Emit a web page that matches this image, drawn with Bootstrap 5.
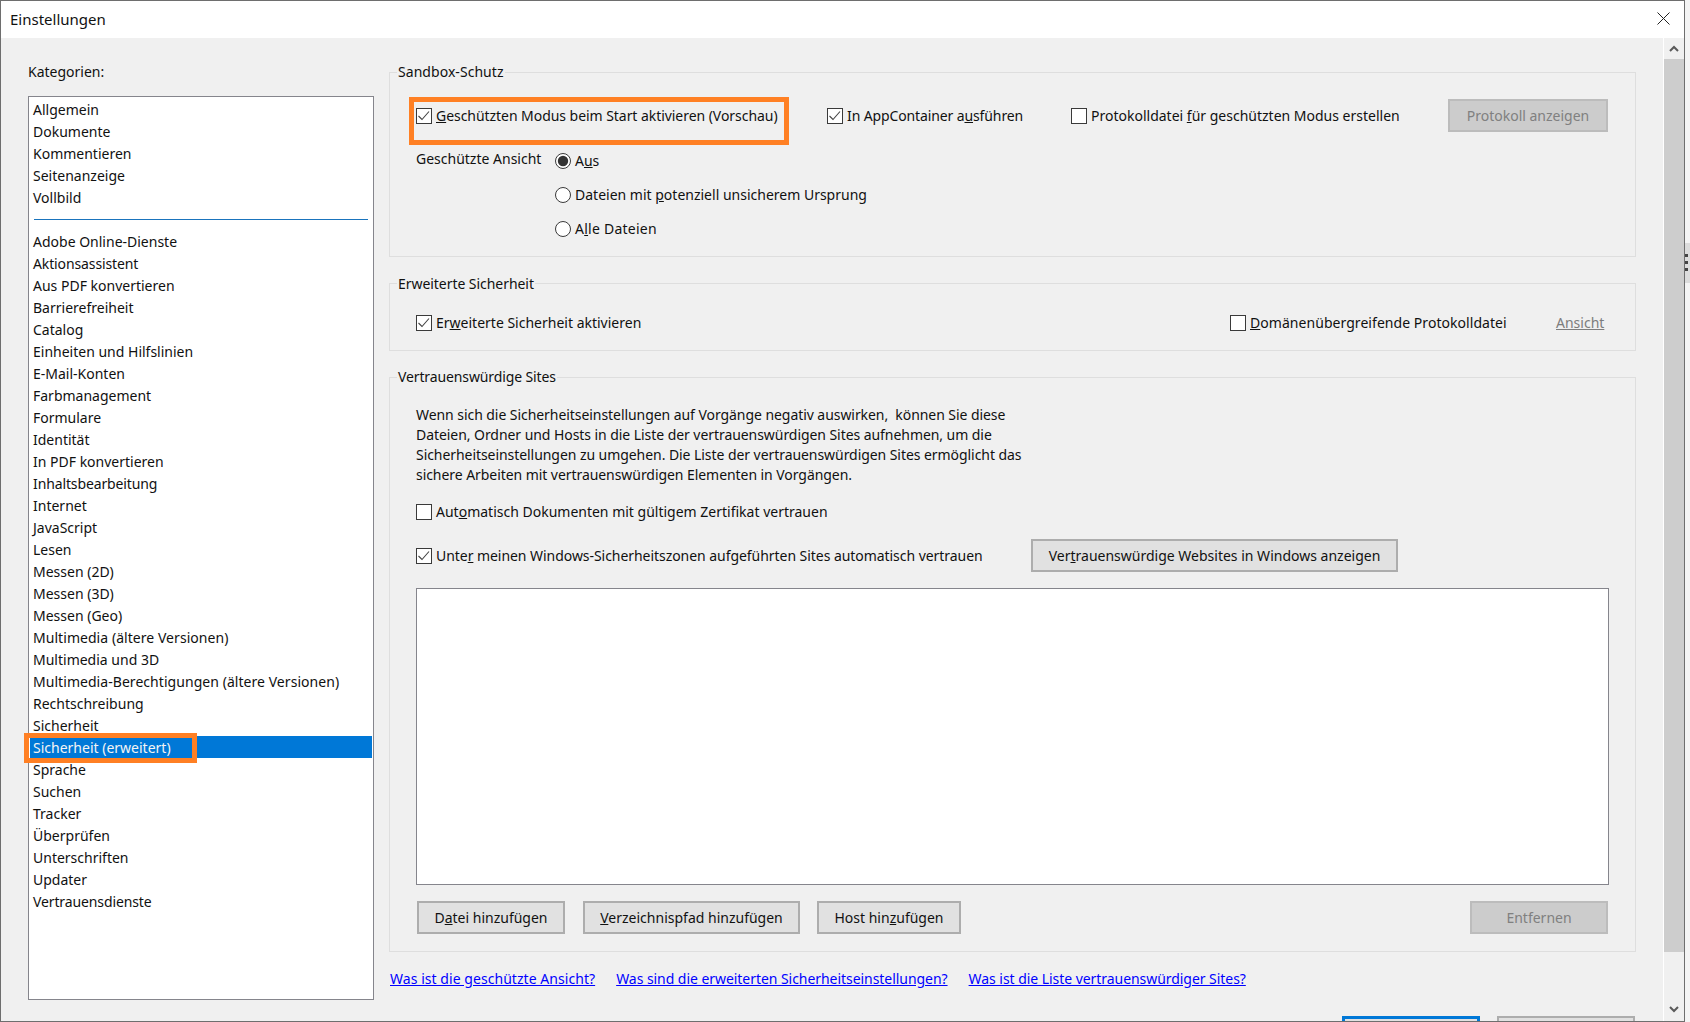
<!doctype html>
<html lang="de"><head><meta charset="utf-8"><title>Einstellungen</title>
<link rel="stylesheet" href="https://cdn.jsdelivr.net/npm/bootstrap@5.3.0/dist/css/bootstrap.min.css">
<style>
html,body{height:100%}
body{background:#f4f4f4;margin:0;overflow:hidden;font-family:"Noto Sans","Liberation Sans",sans-serif;font-size:14px;line-height:20px;color:#111}
.win{width:1685px;height:1022px;border:1px solid #6e6e6e;flex:none;overflow:hidden}
.titlebar{height:37px;background:#fff;padding-left:9px;padding-right:14px;padding-bottom:2px;font-size:15px}
.client{height:983px;background:#f0f0f0;overflow:hidden}
.leftcol{width:346px;margin-left:27px;margin-top:24px;margin-right:15px;flex:none}
.katlabel{height:20px;margin-bottom:14px}
.katlist{height:904px;border:1px solid #85858c;background:#fff;padding:2px 1px;border-radius:0;display:block}
.katlist .list-group-item{border:0;padding:1px 0 1px 3px;height:22px;line-height:20px;background:transparent;color:#111;border-radius:0;font-size:14px}
.katlist .list-group-item.active{background:#0078d7;color:#f4f4f4;position:relative;margin-top:-1px;margin-bottom:1px;padding-top:2px;padding-bottom:0}
.katsep{height:1px;background:#1a74bd;margin:10px 4px 11px}
.callout{position:absolute;border:5px solid #ff8024;pointer-events:none}
.callout-a{left:-6px;top:-3px;width:173px;height:30px}
.callout-b{left:-7px;top:-9px;width:380px;height:48px}
.rightcol{width:1247px;flex:none;padding-top:24px}
.grp{border:1px solid #dedede;padding:0;margin:0;min-width:0}
.grp>legend{float:none;width:auto;font-size:14px;line-height:20px;margin:0 0 0 7px;padding:0 1px;height:20px}
.grp-a{height:195px}.grp-b{height:78px;margin-top:16px}.grp-c{height:585px;margin-top:16px}
.grp-b>legend{padding-top:1px}
.rowline{padding-left:26px;padding-right:27px}
.cell-a{width:411px;position:relative}.cell-b{width:244px}.cell-c{width:377px}
.r1{margin-top:17px;height:33px}
.gsa{width:139px;margin-top:5px}
.r2{margin-top:12px}
.radrow{height:34px}
.r3{margin-top:13px;height:34px}
.cell-d{width:814px}.cell-e{width:326px}
.para{margin:18px 0 0 26px;width:640px;letter-spacing:-.06px}
.r4{margin-top:15px;height:24px}
.r5{margin-top:15px;height:33px}
.cell-f{width:615px}
.wbox{margin:16px 26px 0 26px;height:297px;background:#fff;border:1px solid #85858c}
.r6{margin-top:16px;height:33px;padding-left:27px}
.helplinks{margin-top:17px;height:20px;padding-left:1px;gap:21px}
.helplinks a{color:#00f}
.footbtns{margin-top:27px;gap:17px;justify-content:flex-end;padding-right:1px}
.ls-p{letter-spacing:.05px}.ls-pp{letter-spacing:.25px}.ls-n{letter-spacing:-.05px}.ls-nn{letter-spacing:-.12px}
.form-check-input.xbox{width:16px;height:16px;margin:0 4px 0 0;border:1px solid #3a3a3a;border-radius:0;background-color:#fff;flex:none}
.form-check-input.xbox:checked{background-color:#fff;border-color:#3a3a3a;background-image:url("data:image/svg+xml,%3Csvg xmlns='http://www.w3.org/2000/svg' viewBox='0 0 16 16'%3E%3Cpath d='M2.5 8l3.5 3.5 7-8' fill='none' stroke='%23444' stroke-width='1.1'/%3E%3C/svg%3E");background-size:16px 16px}
.form-check-input.xrad{width:16px;height:16px;margin:0 4px 0 0;border:1px solid #3a3a3a;background-color:#fff;flex:none}
.form-check-input.xrad:checked{background-color:#fff;border-color:#3a3a3a;background-image:url("data:image/svg+xml,%3Csvg xmlns='http://www.w3.org/2000/svg' viewBox='0 0 16 16'%3E%3Ccircle cx='8' cy='8' r='5.2' fill='%23333'/%3E%3C/svg%3E");background-size:16px 16px}
.form-check-input.xbox:focus,.form-check-input.xrad:focus{box-shadow:none}
.lab{margin:0}
.wbtn{height:33px;padding:0;border-radius:0;font-size:14px;line-height:20px;border:2px solid #adadad;background:#e1e1e1;color:#111;flex:none}
.wbtn:disabled{background:#ccc;border-color:#bcbcbc;color:#808080;opacity:1}
.b-prot{width:160px}.b-win{width:367px}
.b-dat{width:148px}.b-ver{width:217px;margin-left:18px}.b-host{width:144px;margin-left:17px}.b-ent{width:138px}
.b-ok{width:138px;height:30px;border:3px solid #0078d7}.b-cancel{width:138px;height:30px}
.ansicht{color:#7d7d7d}
.scrolltrack{width:21px;flex:none;border-left:1px solid #fff;background:#f0f0f0}
.sarrow{height:21px}
.sthumb{height:893px;background:#cdcdcd}
.slow{height:69px;padding-bottom:8px}
.sidestrip{width:5px;flex:none}
.strip-band{height:40px;margin-top:243px;background:#dcdcdc;padding-top:11px}
.strip-dot{height:3px;width:3px;background:#444;margin-bottom:4px}
</style></head>
<body class="d-flex">
<div class="win">
  <div class="titlebar d-flex align-items-center justify-content-between">
    <span>Einstellungen</span>
    <svg width="13" height="13" viewBox="0 0 13 13" aria-label="Schließen"><path d="M.5.5l12 12M12.5.5l-12 12" stroke="#222" stroke-width="1" fill="none"/></svg>
  </div>
  <div class="client d-flex">
    <div class="leftcol">
      <div class="katlabel">Kate<u>g</u>orien:</div>
      <div class="list-group katlist">
        <div class="list-group-item">Allgemein</div>
        <div class="list-group-item">Dokumente</div>
        <div class="list-group-item">Kommentieren</div>
        <div class="list-group-item">Seitenanzeige</div>
        <div class="list-group-item">Vollbild</div>
        <div class="katsep"></div>
        <div class="list-group-item">Adobe Online-Dienste</div>
        <div class="list-group-item ls-nn">Aktionsassistent</div>
        <div class="list-group-item">Aus PDF konvertieren</div>
        <div class="list-group-item">Barrierefreiheit</div>
        <div class="list-group-item">Catalog</div>
        <div class="list-group-item">Einheiten und Hilfslinien</div>
        <div class="list-group-item">E-Mail-Konten</div>
        <div class="list-group-item">Farbmanagement</div>
        <div class="list-group-item">Formulare</div>
        <div class="list-group-item">Identität</div>
        <div class="list-group-item">In PDF konvertieren</div>
        <div class="list-group-item ls-nn">Inhaltsbearbeitung</div>
        <div class="list-group-item">Internet</div>
        <div class="list-group-item">JavaScript</div>
        <div class="list-group-item">Lesen</div>
        <div class="list-group-item">Messen (2D)</div>
        <div class="list-group-item">Messen (3D)</div>
        <div class="list-group-item">Messen (Geo)</div>
        <div class="list-group-item ls-p">Multimedia (ältere Versionen)</div>
        <div class="list-group-item">Multimedia und 3D</div>
        <div class="list-group-item ls-p">Multimedia-Berechtigungen (ältere Versionen)</div>
        <div class="list-group-item">Rechtschreibung</div>
        <div class="list-group-item">Sicherheit</div>
        <div class="list-group-item active">Sicherheit (erweitert)<span class="callout callout-a"></span></div>
        <div class="list-group-item">Sprache</div>
        <div class="list-group-item">Suchen</div>
        <div class="list-group-item">Tracker</div>
        <div class="list-group-item">Überprüfen</div>
        <div class="list-group-item">Unterschriften</div>
        <div class="list-group-item">Updater</div>
        <div class="list-group-item ls-nn">Vertrauensdienste</div>
      </div>
    </div>
    <div class="rightcol">
      <fieldset class="grp grp-a">
        <legend class="ls-p">Sandbox-Schutz</legend>
        <div class="rowline r1 d-flex align-items-center">
          <div class="cell-a d-flex align-items-center"><input class="form-check-input xbox" type="checkbox" checked><label class="lab ls-n"><u>G</u>eschützten Modus beim Start aktivieren (Vorschau)</label><span class="callout callout-b"></span></div>
          <div class="cell-b d-flex align-items-center"><input class="form-check-input xbox" type="checkbox" checked><label class="lab ls-nn">In AppContainer a<u>u</u>sführen</label></div>
          <div class="cell-c d-flex align-items-center"><input class="form-check-input xbox" type="checkbox"><label class="lab">Protokolldatei <u>f</u>ür geschützten Modus erstellen</label></div>
          <button class="btn wbtn b-prot" type="button" disabled>Protokoll anzeigen</button>
        </div>
        <div class="rowline r2 d-flex">
          <div class="gsa">Geschützte Ansicht</div>
          <div>
            <div class="radrow d-flex align-items-center"><input class="form-check-input xrad" type="radio" name="ga" checked><label class="lab">A<u>u</u>s</label></div>
            <div class="radrow d-flex align-items-center"><input class="form-check-input xrad" type="radio" name="ga"><label class="lab">Dateien mit <u>p</u>otenziell unsicherem Ursprung</label></div>
            <div class="radrow d-flex align-items-center"><input class="form-check-input xrad" type="radio" name="ga"><label class="lab ls-pp">A<u>l</u>le Dateien</label></div>
          </div>
        </div>
      </fieldset>
      <fieldset class="grp grp-b">
        <legend class="ls-n">Erweiterte Sicherheit</legend>
        <div class="rowline r3 d-flex align-items-center">
          <div class="cell-d d-flex align-items-center"><input class="form-check-input xbox" type="checkbox" checked><label class="lab">Er<u>w</u>eiterte Sicherheit aktivieren</label></div>
          <div class="cell-e d-flex align-items-center"><input class="form-check-input xbox" type="checkbox"><label class="lab ls-p"><u>D</u>omänenübergreifende Protokolldatei</label></div>
          <u class="ansicht">Ansicht</u>
        </div>
      </fieldset>
      <fieldset class="grp grp-c">
        <legend class="ls-nn">Vertrauenswürdige Sites</legend>
        <div class="para">Wenn sich die Sicherheitseinstellungen auf Vorgänge negativ auswirken,&nbsp; können Sie diese<br>Dateien, Ordner und Hosts in die Liste der vertrauenswürdigen Sites aufnehmen, um die<br>Sicherheitseinstellungen zu umgehen. Die Liste der vertrauenswürdigen Sites ermöglicht das<br>sichere Arbeiten mit vertrauenswürdigen Elementen in Vorgängen.</div>
        <div class="rowline r4 d-flex align-items-center"><input class="form-check-input xbox" type="checkbox"><label class="lab">Aut<u>o</u>matisch Dokumenten mit gültigem Zertifikat vertrauen</label></div>
        <div class="rowline r5 d-flex align-items-center">
          <div class="cell-f d-flex align-items-center"><input class="form-check-input xbox" type="checkbox" checked><label class="lab ls-n">Unte<u>r</u> meinen Windows-Sicherheitszonen aufgeführten Sites automatisch vertrauen</label></div>
          <button class="btn wbtn b-win" type="button">Ver<u>t</u>rauenswürdige Websites in Windows anzeigen</button>
        </div>
        <div class="wbox"></div>
        <div class="rowline r6 d-flex align-items-center">
          <button class="btn wbtn b-dat" type="button">D<u>a</u>tei hinzufügen</button>
          <button class="btn wbtn b-ver" type="button"><u>V</u>erzeichnispfad hinzufügen</button>
          <button class="btn wbtn b-host" type="button">Host hin<u>z</u>ufügen</button>
          <button class="btn wbtn b-ent ms-auto" type="button" disabled>Entfernen</button>
        </div>
      </fieldset>
      <div class="helplinks d-flex">
        <a href="#" class="ls-p">Was ist die geschützte Ansicht?</a>
        <a href="#" class="ls-n">Was sind die erweiterten Sicherheitseinstellungen?</a>
        <a href="#" class="ls-n">Was ist die Liste vertrauenswürdiger Sites?</a>
      </div>
      <div class="footbtns d-flex">
        <button class="btn wbtn b-ok" type="button" aria-label="OK"></button>
        <button class="btn wbtn b-cancel" type="button" aria-label="Abbrechen"></button>
      </div>
    </div>
    <div class="flex-grow-1"></div>
    <div class="scrolltrack d-flex flex-column">
      <div class="sarrow d-flex align-items-center justify-content-center"><svg width="10" height="7" viewBox="0 0 10 7"><path d="M1 6l4-4 4 4" fill="none" stroke="#5a5a5a" stroke-width="2"/></svg></div>
      <div class="sthumb"></div>
      <div class="slow d-flex align-items-end justify-content-center"><svg width="10" height="7" viewBox="0 0 10 7"><path d="M1 1l4 4 4-4" fill="none" stroke="#5a5a5a" stroke-width="2"/></svg></div>
    </div>
  </div>
</div>
<div class="sidestrip"><div class="strip-band"><div class="strip-dot"></div><div class="strip-dot"></div><div class="strip-dot"></div></div></div>
<script src="https://cdn.jsdelivr.net/npm/bootstrap@5.3.0/dist/js/bootstrap.bundle.min.js"></script>
</body></html>
